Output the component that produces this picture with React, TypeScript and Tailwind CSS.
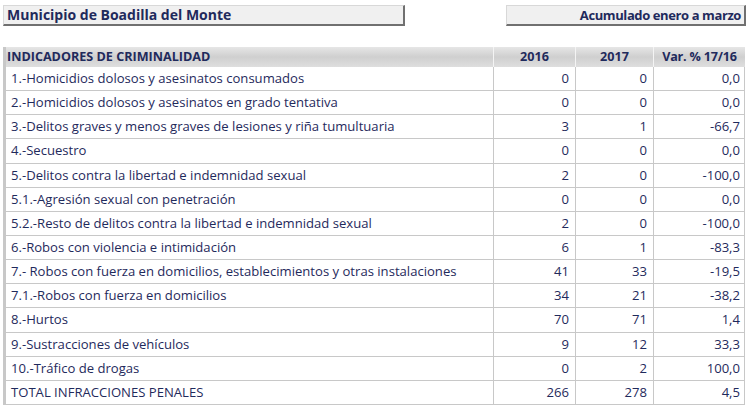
const rows: [string, string, string, string][] = [
  ["1.-Homicidios dolosos y asesinatos consumados", "0", "0", "0,0"],
  ["2.-Homicidios dolosos y asesinatos en grado tentativa", "0", "0", "0,0"],
  ["3.-Delitos graves y menos graves de lesiones y riña tumultuaria", "3", "1", "-66,7"],
  ["4.-Secuestro", "0", "0", "0,0"],
  ["5.-Delitos contra la libertad e indemnidad sexual", "2", "0", "-100,0"],
  ["5.1.-Agresión sexual con penetración", "0", "0", "0,0"],
  ["5.2.-Resto de delitos contra la libertad e indemnidad sexual", "2", "0", "-100,0"],
  ["6.-Robos con violencia e intimidación", "6", "1", "-83,3"],
  ["7.- Robos con fuerza en domicilios, establecimientos y otras instalaciones", "41", "33", "-19,5"],
  ["7.1.-Robos con fuerza en domicilios", "34", "21", "-38,2"],
  ["8.-Hurtos", "70", "71", "1,4"],
  ["9.-Sustracciones de vehículos", "9", "12", "33,3"],
  ["10.-Tráfico de drogas", "0", "2", "100,0"],
  ["TOTAL INFRACCIONES PENALES", "266", "278", "4,5"],
];

const cols = "grid grid-cols-[487px_82px_78px_92px]";

export default function App() {
  return (
    <div className="w-[750px] h-[408px] bg-white overflow-hidden text-[#1f2a5c] font-['Open_Sans',sans-serif] text-[13.1px]">
      {/* title bar */}
      <div className="flex justify-between pl-[3px] pr-[4px] pt-[5px]">
        <div className="w-[402px] h-[21px] bg-[#f0f0f0] border-t border-l border-[#d8d8d8] border-r-2 border-b-2 border-r-[#707070] border-b-[#707070] pl-[3px] font-bold text-[14px] leading-[18px]">
          Municipio de Boadilla del Monte
        </div>
        <div className="w-[240px] h-[21px] bg-[#f0f0f0] border-t border-l border-[#d8d8d8] border-r-2 border-b-2 border-r-[#707070] border-b-[#707070] pr-[3px] font-bold text-[13px] tracking-[-0.4px] leading-[18px] text-right">
          Acumulado enero a marzo
        </div>
      </div>

      {/* table */}
      <div className="mt-[21px] ml-[3px] w-[742px] border-l-[3px] border-[#c8c8c8]">
        <div className={`${cols} h-[20px] bg-gradient-to-b from-[#e6e6e6] via-[#cfcfcf] to-[#dedede] font-bold leading-[20px] text-[12.6px]`}>
          <div className="pl-[1px]">INDICADORES DE CRIMINALIDAD</div>
          <div className="text-center border-l border-[#f4f4f4]">2016</div>
          <div className="text-center border-l border-[#f4f4f4]">2017</div>
          <div className="text-center border-l border-[#f4f4f4] tracking-[-0.2px]">Var. % 17/16</div>
        </div>
        {rows.map(([label, a, b, v], i) => (
          <div
            key={i}
            className={`${cols} h-[24.15px] leading-[23px] border-b border-[#c8c8c8]`}
          >
            <div className="pl-[5px] whitespace-nowrap">{label}</div>
            <div className="text-right pr-[6px] border-l border-[#c8c8c8]">{a}</div>
            <div className="text-right pr-[6px] border-l border-[#c8c8c8]">{b}</div>
            <div className="text-right pr-[4px] border-l border-[#c8c8c8] border-r">{v}</div>
          </div>
        ))}
      </div>
    </div>
  );
}
